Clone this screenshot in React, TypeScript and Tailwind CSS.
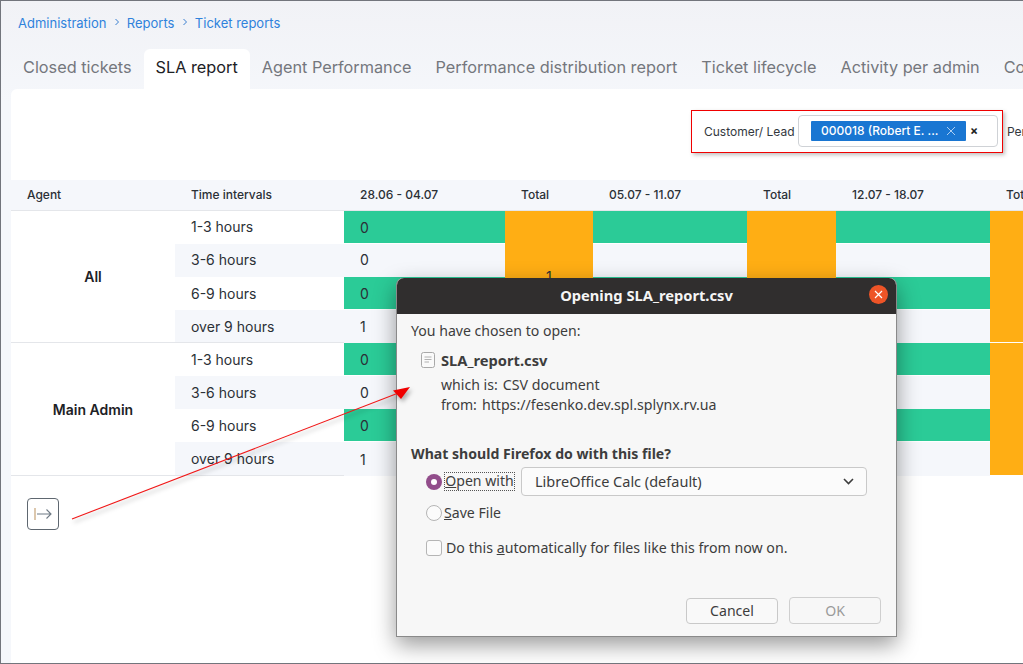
import React from "react";

const GREEN = "bg-[#2bcb97]";
const LIGHT = "bg-[#f5f7fb]";

const tabs = ["Closed tickets", "SLA report", "Agent Performance", "Performance distribution report", "Ticket lifecycle", "Activity per admin", "Competitors"];
const intervals = ["1-3 hours", "3-6 hours", "6-9 hours", "over 9 hours"];

function Chevron() {
  return (
    <svg width="6" height="8" viewBox="0 0 6 8" className="mb-[3px]" fill="none" stroke="#3a7fd0" strokeWidth="1">
      <path d="M1.5 1 L4.5 4 L1.5 7" />
    </svg>
  );
}

function Group({ name, values, total }: { name: string; values: string[]; total?: string }) {
  return (
    <>
      <div className="row-span-4 flex items-center justify-center border-b border-[#e4e6ea] text-[14px] font-semibold text-[#1d2125]">{name}</div>
      {intervals.map((iv, i) => {
        const odd = i % 2 === 0;
        const stripe = odd ? "" : LIGHT;
        const cellBg = odd ? GREEN : LIGHT;
        const lift = total && i < 2;
        return (
          <React.Fragment key={iv}>
            <div className={`flex items-center pl-4 text-[14px] text-[#2b3036] ${stripe} ${i === 3 ? "border-b border-[#e4e6ea]" : ""} ${lift ? "pb-[2px]" : ""}`}>{iv}</div>
            <div className={`flex items-center pl-4 text-[14px] text-[#2b3036] ${cellBg} ${odd ? "mb-px" : ""} ${lift && i === 1 ? "pb-[2px]" : ""}`}>{values[i]}</div>
            {i === 0 && <div className="row-span-4 mb-px flex items-center pl-[41px] text-[14px] text-[#2b3036] bg-[#ffae14]">{total}</div>}
            <div className={`${cellBg} ${odd ? "mb-px" : ""}`} />
            {i === 0 && <div className="row-span-4 mb-px bg-[#ffae14]" />}
            <div className={`${cellBg} ${odd ? "mb-px" : ""}`} />
            {i === 0 && <div className="row-span-4 mb-px bg-[#ffae14]" />}
          </React.Fragment>
        );
      })}
    </>
  );
}

export default function App() {
  const dlgFont = { fontFamily: '"Noto Sans", "Open Sans", sans-serif' };
  return (
    <div className="relative h-[664px] w-[1023px] overflow-hidden border-t border-b border-l border-[#72757c] bg-gradient-to-b from-[#f1f2f6] to-[#f5f7fb] to-[100px] font-['Inter',sans-serif]">
      {/* breadcrumb */}
      <div className="flex h-[48px] items-center gap-[7.2px] pb-[3px] pl-[17px] text-[13px] text-[#2f82dc]">
        <span>Administration</span>
        <Chevron />
        <span>Reports</span>
        <Chevron />
        <span>Ticket reports</span>
      </div>

      {/* tabs */}
      <div className="ml-[10px] flex h-[40px] whitespace-nowrap">
        {tabs.map((t) => (
          <div
            key={t}
            className={`flex items-center px-3 pb-[4px] text-[16.28px] ${t === "SLA report" ? "rounded-t-[6px] bg-white text-[#1d2125]" : "text-[#74777d]"}`}
          >
            {t}
          </div>
        ))}
      </div>

      {/* card */}
      <div className="ml-[10px] h-[574px] overflow-hidden rounded-tl-[6px] bg-white">
        <div className="flex h-[91px] items-start whitespace-nowrap pl-[693px] pt-[26px]">
          <span className="mt-[8px] w-[94px] shrink-0 text-[12px] text-[#33383e]">Customer/ Lead</span>
          <div className="flex h-[32px] w-[200px] shrink-0 items-center rounded-[4px] border border-[#cfd2d6] pl-[12px]">
            <div className="flex h-[20px] w-[155px] items-center rounded-[1px] bg-[#1976d2] pl-[10px] text-[12px] font-medium text-white">
              <span className="w-[125px]">000018 (Robert E. ...</span>
              <svg width="10" height="10" viewBox="0 0 10 10" stroke="#bcd8f5" strokeWidth="0.9"><path d="M1 1 L9 9 M9 1 L1 9" /></svg>
            </div>
            <span className="ml-[4px] text-[12px] font-bold text-[#222]">×</span>
          </div>
          <span className="ml-[9px] mt-[8px] text-[12px] text-[#33383e]">Period</span>
        </div>

        {/* table */}
        <div className="grid grid-cols-[164px_169px_161px_88px_154px_89px_154px_154px] grid-rows-[31px_33px_33px_33px_33px_33px_33px_33px_34px]">
          {["Agent", "Time intervals", "28.06 - 04.07", "Total", "05.07 - 11.07", "Total", "12.07 - 18.07", "Total"].map((h, i) => (
            <div key={i} className={`flex items-center border-b border-[#e4e6ea] pl-4 text-[12px] font-medium text-[#2b3036] ${LIGHT}`}>{h}</div>
          ))}
          <Group name="All" values={["0", "0", "0", "1"]} total="1" />
          <Group name="Main Admin" values={["0", "0", "0", "1"]} />
        </div>

        {/* export button */}
        <button className="ml-4 mt-[22px] flex h-[32px] w-[32px] items-center justify-center rounded-[4px] border border-[#5e6770]">
          <svg width="18" height="14" viewBox="0 0 18 14" fill="none" strokeWidth="1.1">
            <path d="M1 1 V13" stroke="#c09a6a" />
            <path d="M3 7 H17 M12.5 2.5 L17 7 L12.5 11.5" stroke="#6f7a85" />
          </svg>
        </button>
      </div>

      {/* red highlight round the customer filter */}
      <div className="absolute left-[690px] top-[109px] h-[43px] w-[312px] border border-[#f00000] shadow-[2px_2px_4px_rgba(0,0,0,0.25)]" />

      {/* Firefox dialog */}
      <div
        style={dlgFont}
        className="absolute left-[395px] top-[277px] flex h-[359px] w-[501px] flex-col rounded-t-[7px] border-b border-l border-r border-[#8a8a8a] bg-[#f7f7f7] text-[14.1px] text-[#3d3d3d] shadow-[0_8px_22px_rgba(0,0,0,0.4)]"
      >
        <div className="flex h-[36px] shrink-0 items-center justify-center rounded-t-[7px] bg-[#302e2e] pb-[2px] text-[14.7px] font-bold text-[#f5f5f5]">
          Opening SLA_report.csv
          <div className="absolute right-[8px] top-[7px] flex h-[19px] w-[19px] items-center justify-center rounded-full bg-[#ee5427]">
            <svg width="9" height="9" viewBox="0 0 9 9" stroke="white" strokeWidth="1.2"><path d="M1 1 L8 8 M8 1 L1 8" /></svg>
          </div>
        </div>

        <div className="flex flex-1 flex-col pl-[14px]">
          <div className="mt-[7px] leading-[20px]">You have chosen to open:</div>
          <div className="ml-[10px] mt-[9px] flex h-[20px] items-center gap-[6px]">
            <svg width="14" height="16" viewBox="0 0 14 16" fill="#fafafa" stroke="#a9a9a9" strokeWidth="1">
              <rect x="0.5" y="0.5" width="13" height="15" rx="2" />
              <path d="M3.5 5 H10.5 M3.5 7.5 H10.5 M3.5 10 H8" strokeWidth="0.9" />
            </svg>
            <span className="text-[14.7px] font-bold">SLA_report.csv</span>
          </div>
          <div className="ml-[30px] mt-[5px] flex gap-[5px] leading-[20px]"><span>which is:</span><span className="text-[14.2px]">CSV document</span></div>
          <div className="ml-[30px] flex gap-[5px] leading-[20px]"><span>from:</span><span className="text-[14.2px]">https://fesenko.dev.spl.splynx.rv.ua</span></div>

          <div className="mt-[29px] font-bold leading-[20px]">What should Firefox do with this file?</div>

          <div className="ml-[15px] mt-[3px] flex h-[29px] items-center">
            <span className="flex h-[16px] w-[16px] items-center justify-center rounded-full bg-[#924d8b]">
              <span className="h-[6px] w-[6px] rounded-full bg-white" />
            </span>
            <span className="ml-[2px] flex h-[19px] w-[71px] items-center justify-center border border-dotted border-[#555] leading-none">
              <span><span className="underline">O</span>pen with</span>
            </span>
            <div className="ml-[6px] flex h-[29px] w-[346px] items-center justify-between rounded-[4px] border border-[#c9c9c9] bg-[#fbfbfb] pl-[13px] pr-[12px]">
              <span className="text-[14.5px]">LibreOffice Calc (default)</span>
              <svg width="11" height="7" viewBox="0 0 11 7" fill="none" stroke="#3d3d3d" strokeWidth="1.6"><path d="M1 1 L5.5 5.5 L10 1" /></svg>
            </div>
          </div>

          <div className="ml-[15px] mt-[2px] flex h-[29px] items-center">
            <span className="h-[16px] w-[16px] rounded-full border border-[#b5b5b5] bg-[#fbfbfb]" />
            <span className="ml-[2px]"><span className="underline">S</span>ave File</span>
          </div>

          <div className="ml-[15px] mt-[11px] flex h-[20px] items-center">
            <span className="h-[16px] w-[16px] rounded-[3px] border border-[#b5b5b5] bg-[#fbfbfb]" />
            <span className="ml-[4px] text-[14.2px]">Do this <span className="underline">a</span>utomatically for files like this from now on.</span>
          </div>

          <div className="mb-[12px] mr-[15px] mt-auto flex items-center justify-end gap-[11px]">
            <button className="h-[26px] w-[92px] rounded-[4px] border border-[#c9c9c9] bg-[#f9f9f9] text-[#3d3d3d]">Cancel</button>
            <button className="h-[27px] w-[92px] rounded-[4px] border border-[#cfcfcf] bg-[#f7f7f7] text-[#9a9a9a]">OK</button>
          </div>
        </div>
      </div>

      {/* red annotation arrow */}
      <svg className="pointer-events-none absolute left-0 top-0" width="1023" height="664" style={{ filter: "drop-shadow(2px 3px 2px rgba(0,0,0,0.3))" }}>
        <path d="M71 518 L400 391" stroke="#f01818" strokeWidth="1.1" fill="none" />
        <path d="M409 386 L392 389.5 L400 398 Z" fill="#f00000" />
      </svg>
    </div>
  );
}
